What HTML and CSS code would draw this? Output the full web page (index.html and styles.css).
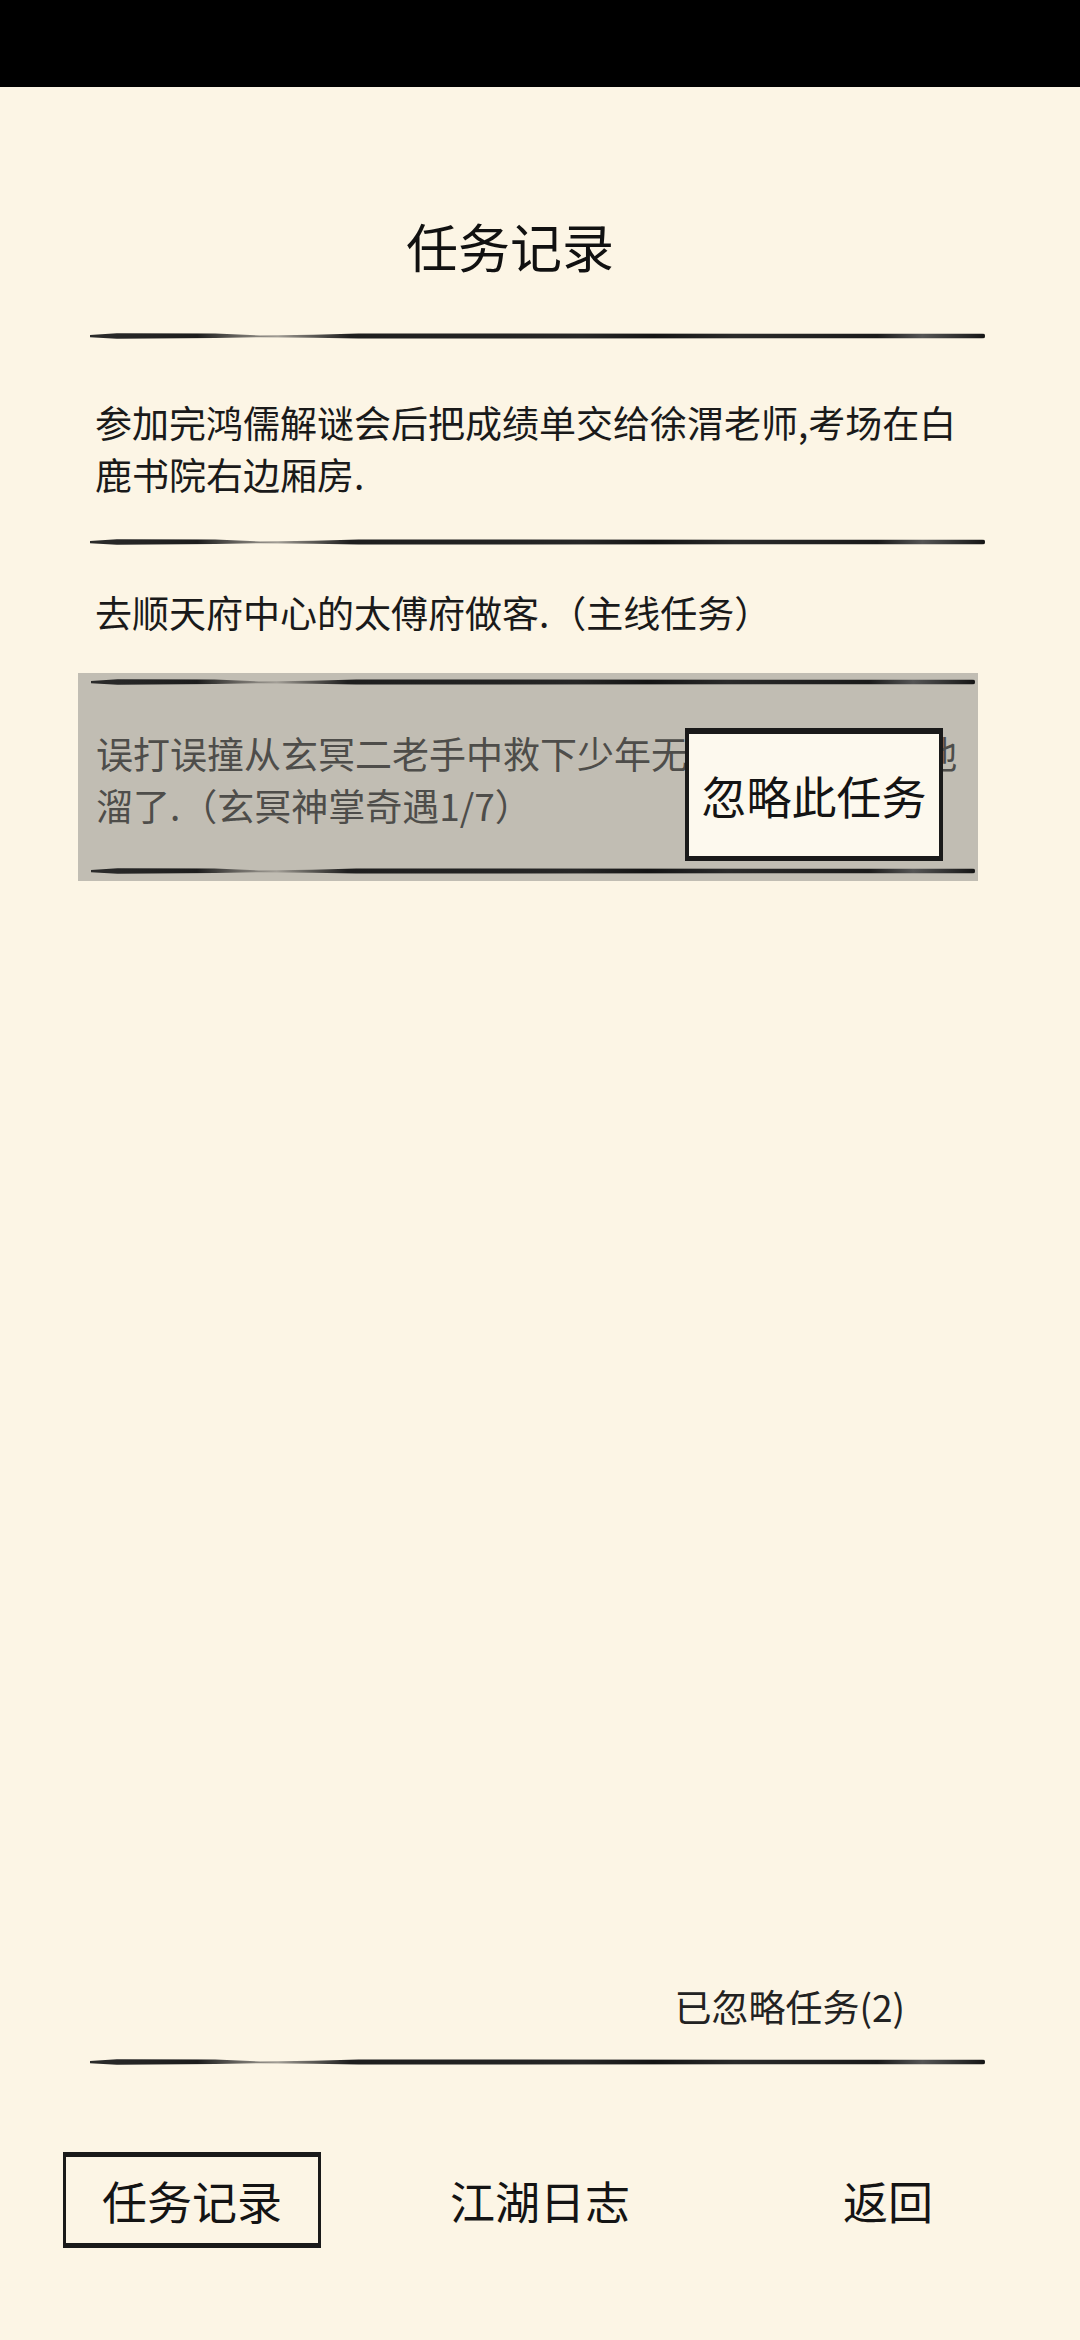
FILE: index.html
```html
<!DOCTYPE html>
<html lang="zh-CN">
<head>
<meta charset="utf-8">
<title>任务记录</title>
<link rel="stylesheet" href="styles.css">
</head>
<body>
<div class="status-bar"></div>
<main class="page">
  <h1 class="title">任务记录</h1>

  <section class="list">
    <div class="rule"></div>
    <p class="entry entry--first">参加完鸿儒解谜会后把成绩单交给徐渭老师,考场在白鹿书院右边厢房.</p>
    <div class="rule"></div>
    <p class="entry entry--before-selected">去顺天府中心的太傅府做客.（主线任务）</p>

    <div class="entry-selected">
      <div class="rule"></div>
      <p class="entry entry--muted">误打误撞从玄冥二老手中救下少年无忌,却不料又让他溜了.（玄冥神掌奇遇1/7）</p>
      <div class="rule"></div>
      <button class="ignore-btn" type="button">忽略此任务</button>
    </div>
  </section>

  <section class="bottom">
    <div class="ignored">已忽略任务(2)</div>
    <div class="list">
      <div class="rule"></div>
    </div>
    <nav class="tabs">
      <div class="tab"><span class="tab-label tab-label--active">任务记录</span></div>
      <div class="tab"><span class="tab-label">江湖日志</span></div>
      <div class="tab"><span class="tab-label">返回</span></div>
    </nav>
  </section>
</main>
</body>
</html>
```

FILE: styles.css
```css
* {
  box-sizing: border-box;
}

html,
body {
  margin: 0;
  padding: 0;
}

body {
  width: 1080px;
  height: 2340px;
  background: #fcf5e5;
  color: #161616;
  font-family: "Noto Sans CJK SC", "Noto Sans", sans-serif;
  overflow: hidden;
}

.status-bar {
  height: 87px;
  background: #000;
}

.page {
  height: 2253px;
  display: flex;
  flex-direction: column;
  padding-bottom: 92px;
}

.title {
  margin: 129px 0 0;
  padding-right: 60px;
  font-size: 52px;
  font-weight: 400;
  line-height: 60px;
  text-align: center;
  color: #111;
}

.list {
  margin: 57px 95px 0 90px;
}

/* brush-stroke divider */
.rule {
  height: 6px;
  border-radius: 2px 4px 4px 2px;
  background: linear-gradient(90deg,
    #2b2b2b 0%, #1c1c1c 12%, #6e6b66 17%, #a29e96 21%, #5a5854 25%,
    #1e1e1e 29%, #262626 55%, #141414 63%, #2a2a2a 72%, #1a1a1a 88%,
    #555 93%, #151515 100%);
  clip-path: polygon(0 35%, 3% 5%, 14% 10%, 19% 40%, 25% 30%, 30% 8%,
    100% 12%, 100% 88%, 30% 92%, 25% 80%, 19% 70%, 14% 85%, 3% 95%, 0 70%);
  filter: blur(0.5px);
}

.entry {
  margin: 0;
  padding: 41px 0 39px 5px;
  font-size: 37px;
  line-height: 52px;
  color: #1a1a1a;
}

.entry--first {
  padding-top: 57px;
}

.entry--before-selected {
  padding-bottom: 35px;
}

.entry-selected {
  position: relative;
  margin: 0 7px 0 -12px;
  padding: 6px 3px 7px 13px;
  background: #c1bdb3;
}

.entry--muted {
  padding: 42px 0 37px 5px;
  color: #4e4d4a;
}

.ignore-btn {
  position: absolute;
  left: 607px;
  top: 55px;
  width: 258px;
  height: 133px;
  padding: 0;
  background: #fdf9ee;
  border: 4px solid #1a1a1a;
  border-top-width: 6px;
  border-bottom-width: 5px;
  font-family: "Noto Sans CJK SC", "Noto Sans", sans-serif;
  font-size: 45px;
  line-height: 1;
  color: #141414;
}

.bottom {
  margin-top: auto;
}

.ignored {
  display: flex;
  justify-content: flex-end;
  padding-right: 175px;
  font-size: 37px;
  line-height: 44px;
  color: #222;
}

.bottom .list {
  margin-top: 31px;
}

.tabs {
  display: grid;
  grid-template-columns: repeat(3, 348px);
  margin: 87px 18px 0;
}

.tab {
  display: flex;
  justify-content: center;
  align-items: center;
  height: 96px;
}

.tab-label {
  font-size: 45px;
  line-height: 1;
  color: #141414;
}

.tab-label--active {
  display: flex;
  align-items: center;
  justify-content: center;
  width: 258px;
  height: 96px;
  border: 3px solid #1a1a1a;
  border-top-width: 5px;
  border-bottom-width: 5px;
}
```
